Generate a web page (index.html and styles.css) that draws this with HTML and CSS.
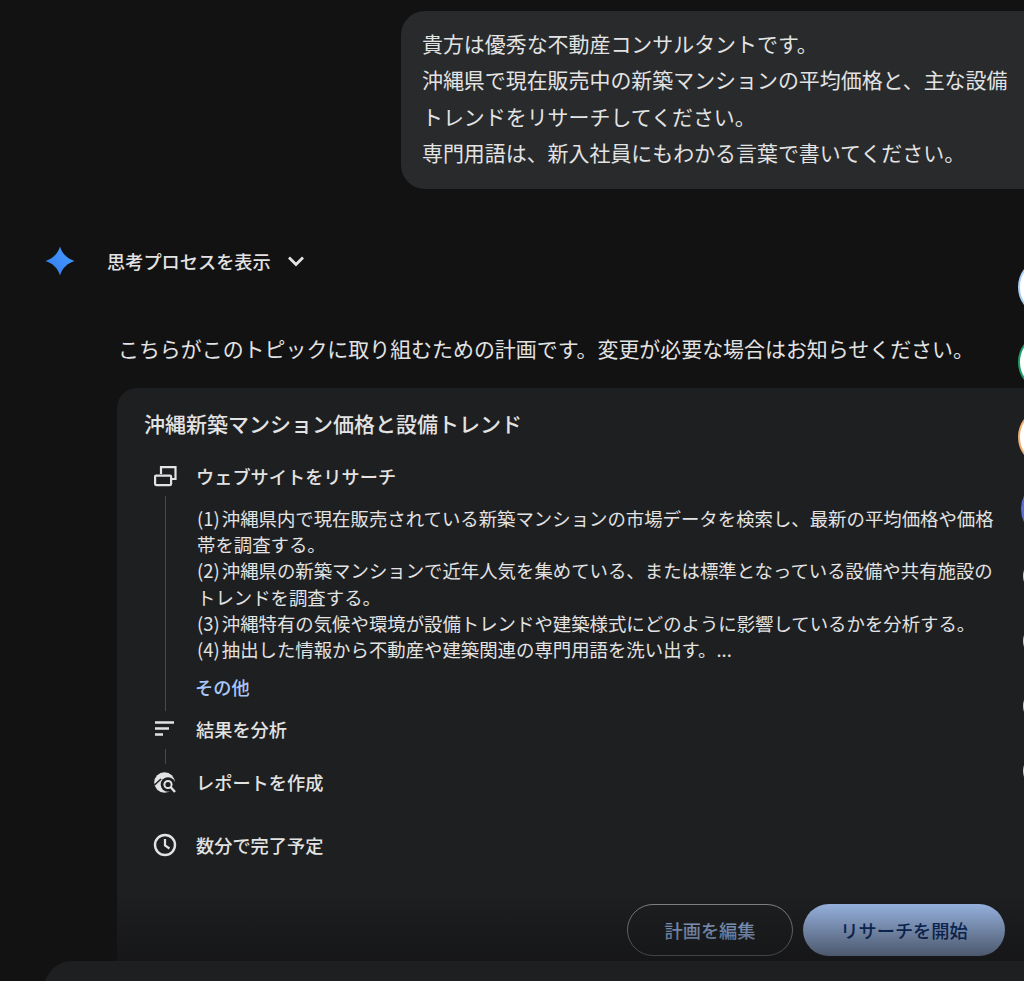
FILE: index.html
```html
<!DOCTYPE html>
<html lang="ja">
<head>
  <meta charset="UTF-8">
  <meta name="viewport" content="width=device-width, initial-scale=1.0">
  <title>Deep Research</title>
  <link rel="stylesheet" href="styles.css">
</head>
<body>
  <div class="page">
    <div class="bubble">
      貴方は優秀な不動産コンサルタントです。<br>
      沖縄県で現在販売中の新築マンションの平均価格と、主な設備<br>
      トレンドをリサーチしてください。<br>
      専門用語は、新入社員にもわかる言葉で書いてください。
    </div>

    <div class="thinking">
      <svg class="spark" width="32" height="32" viewBox="0 0 32 32">
        <defs>
          <linearGradient id="sparkFill" x1="0" y1="1" x2="1" y2="0">
            <stop offset="0" stop-color="#2f7bf0"/>
            <stop offset="1" stop-color="#4b9dff"/>
          </linearGradient>
        </defs>
        <path d="M16 1.5C18 8.5 23.5 14 30.5 16C23.5 18 18 23.5 16 30.5C14 23.5 8.5 18 1.5 16C8.5 14 14 8.5 16 1.5Z" fill="url(#sparkFill)"/>
      </svg>
      <span class="thinking-label">思考プロセスを表示</span>
      <svg class="chevron" width="18" height="18" viewBox="0 0 18 18">
        <path d="M2 5.5L9 12.5L16 5.5" fill="none" stroke="#e3e3e3" stroke-width="2.8"/>
      </svg>
    </div>

    <p class="intro">こちらがこのトピックに取り組むための計画です。変更が必要な場合はお知らせください。</p>

    <div class="card">
      <h2 class="card-title">沖縄新築マンション価格と設備トレンド</h2>

      <div class="step step-first">
        <svg class="step-icon" width="24" height="24" viewBox="0 0 24 24">
          <path d="M8 10V3.2H22.5V15H19" fill="none" stroke="#e3e3e3" stroke-width="2.2"/>
          <rect x="2.1" y="11.6" width="16" height="9.5" rx="1" fill="none" stroke="#e3e3e3" stroke-width="2.2"/>
        </svg>
        <span>ウェブサイトをリサーチ</span>
      </div>
      <div class="step-detail">
        <p class="plan">
          (1) 沖縄県内で現在販売されている新築マンションの市場データを検索し、最新の平均価格や価格<br>
          帯を調査する。<br>
          (2) 沖縄県の新築マンションで近年人気を集めている、または標準となっている設備や共有施設の<br>
          トレンドを調査する。<br>
          (3) 沖縄特有の気候や環境が設備トレンドや建築様式にどのように影響しているかを分析する。<br>
          (4) 抽出した情報から不動産や建築関連の専門用語を洗い出す。...
        </p>
        <a class="more">その他</a>
      </div>

      <div class="step step-analyze">
        <svg class="step-icon" width="24" height="24" viewBox="0 0 24 24">
          <path d="M2 5.5H21M2 11.5H16M2 17.5H10" fill="none" stroke="#e3e3e3" stroke-width="2.4"/>
        </svg>
        <span>結果を分析</span>
      </div>
      <div class="connector"></div>
      <div class="step step-report">
        <svg class="step-icon" width="24" height="24" viewBox="0 0 24 24">
          <circle cx="11.5" cy="12.5" r="10.3" fill="#e3e3e3"/>
          <circle cx="15" cy="14.5" r="7.3" fill="#1e1f21"/>
          <path d="M1.5 15L8 9" stroke="#1e1f21" stroke-width="1.6"/>
          <circle cx="15" cy="14.5" r="3.6" fill="none" stroke="#e3e3e3" stroke-width="2"/>
          <path d="M17.8 17.3L22 22" stroke="#e3e3e3" stroke-width="2.4"/>
        </svg>
        <span>レポートを作成</span>
      </div>
      <div class="step step-time">
        <svg class="step-icon" width="24" height="24" viewBox="0 0 24 24">
          <circle cx="12" cy="12" r="10" fill="none" stroke="#e3e3e3" stroke-width="2.4"/>
          <path d="M12 6V12.5L16.5 15.5" fill="none" stroke="#e3e3e3" stroke-width="2.2"/>
        </svg>
        <span>数分で完了予定</span>
      </div>

      <div class="actions">
        <button class="btn btn-outline">計画を編集</button>
        <button class="btn btn-primary">リサーチを開始</button>
      </div>
    </div>

    <div class="fade"></div>
    <div class="input-box"></div>

    <div class="avatar avatar-blue"></div>
    <div class="avatar avatar-green"></div>
    <div class="avatar avatar-orange"></div>
    <div class="avatar avatar-violet"></div>
    <div class="tick tick-1"></div>
    <div class="tick tick-2"></div>
    <div class="tick tick-3"></div>
    <div class="tick tick-4"></div>
  </div>
</body>
</html>
```

FILE: styles.css
```css
/* Basic styling */
body {
  margin: 0;
  background-color: #121213;
  color: #e3e3e3;
  font-family: "Noto Sans CJK JP", "Noto Sans", sans-serif;
}
.page {
  position: relative;
  width: 1024px;
  height: 981px;
  padding-top: 11px;
  box-sizing: border-box;
  overflow: hidden;
}

/* user message */
.bubble {
  margin-left: 401px;
  padding: 14px 0 18px 21px;
  background-color: #282a2c;
  border-radius: 24px 0 0 24px;
  font-size: 20.95px;
  line-height: 36.4px;
  white-space: nowrap;
}

/* answer header */
.thinking {
  display: flex;
  align-items: center;
  height: 32px;
  margin: 56px 0 0 44px;
}
.thinking-label {
  margin-left: 31px;
  font-size: 18.2px;
  font-weight: 500;
}
.chevron {
  margin-left: 16px;
  margin-top: 1px;
}
.intro {
  margin: 53px 0 0 118px;
  font-size: 20.95px;
  line-height: 36px;
  white-space: nowrap;
}

/* plan card */
.card {
  margin: 22px 0 0 117px;
  padding: 18px 19px 0 27px;
  height: 600px;
  background-color: #1e1f21;
  border-radius: 20px 0 0 0;
}
.card-title {
  margin: 0;
  font-size: 21px;
  font-weight: 500;
  line-height: 35px;
}
.step {
  display: flex;
  align-items: center;
  gap: 19px;
  padding-left: 9px;
  font-size: 18.2px;
  font-weight: 500;
}
.step-first {
  height: 40px;
  margin-top: 15px;
}
.step-detail {
  margin-left: 21px;
  padding: 9px 0 11px 31px;
  border-left: 1px solid #47494c;
}
.plan {
  margin: 0;
  font-size: 18.4px;
  line-height: 26.3px;
  word-spacing: -2px;
  white-space: nowrap;
}
.more {
  display: block;
  margin: 12px 0 0 -2px;
  color: #a8c7fa;
  font-size: 18.2px;
  font-weight: 500;
  line-height: 26px;
}
.step-analyze {
  height: 38px;
  margin-top: -1px;
}
.connector {
  width: 1px;
  height: 15px;
  margin: 1px 0 0 21px;
  background-color: #47494c;
}
.step-report {
  height: 35px;
}
.step-time {
  height: 36px;
  margin-top: 28px;
}

/* buttons */
.actions {
  display: flex;
  justify-content: flex-end;
  gap: 10px;
  margin-top: 41px;
}
.btn {
  height: 52px;
  padding: 0;
  border-radius: 26px;
  font-family: inherit;
  font-size: 18.2px;
  font-weight: 500;
}
.btn-outline {
  width: 166px;
  background: transparent;
  border: 1px solid #8e918f;
  color: #a8c7fa;
}
.btn-primary {
  width: 202px;
  background-color: #a8c7fa;
  border: 0;
  color: #062e6f;
}
.fade {
  position: absolute;
  left: 0;
  right: 0;
  top: 890px;
  height: 71px;
  background: linear-gradient(rgba(18, 18, 19, 0), rgba(18, 18, 19, 0.66));
  pointer-events: none;
}
.input-box {
  position: absolute;
  left: 44px;
  right: -28px;
  top: 961px;
  height: 80px;
  background-color: #1e1f21;
  border-radius: 28px;
}

/* edge of the sources column */
.avatar {
  position: absolute;
  left: 1018px;
  width: 60px;
  height: 60px;
  box-sizing: border-box;
  border-radius: 50%;
  background-color: #fff;
  border: 2px solid #fff;
}
.avatar-blue { top: 257px; border-color: #a8d0f5; }
.avatar-green { top: 332px; border-color: #1e9e6a; }
.avatar-orange { top: 407px; border-color: #f0b070; }
.avatar-violet {
  top: 479px;
  left: 1021px;
  background-color: #5a6fd8;
  border-color: #5a6fd8;
}
.tick {
  position: absolute;
  left: 1023px;
  width: 36px;
  height: 36px;
  border-radius: 50%;
  background-color: #cfd0d1;
}
.tick-1 { top: 558px; }
.tick-2 { top: 623px; }
.tick-3 { top: 688px; }
.tick-4 { top: 753px; }
```
